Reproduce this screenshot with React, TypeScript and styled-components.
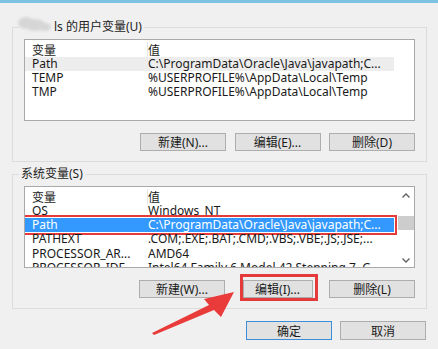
import { createGlobalStyle, styled } from "styled-components";

const Global = createGlobalStyle`
  html, body {
    margin: 0;
    padding: 0;
    background: #f0f0f0;
  }
  body {
    font-family: "Noto Sans", "Noto Sans CJK SC", sans-serif;
    font-size: 12px;
    color: #1a1a1a;
  }
`;

type Row = { name: string; value: string };

const userVars: Row[] = [
  { name: "Path", value: "C:\\ProgramData\\Oracle\\Java\\javapath;C..." },
  { name: "TEMP", value: "%USERPROFILE%\\AppData\\Local\\Temp" },
  { name: "TMP", value: "%USERPROFILE%\\AppData\\Local\\Temp" },
];

const sysVars: Row[] = [
  { name: "OS", value: "Windows_NT" },
  { name: "Path", value: "C:\\ProgramData\\Oracle\\Java\\javapath;C..." },
  { name: "PATHEXT", value: ".COM;.EXE;.BAT;.CMD;.VBS;.VBE;.JS;.JSE;..." },
  { name: "PROCESSOR_AR...", value: "AMD64" },
  { name: "PROCESSOR_IDE...", value: "Intel64 Family 6 Model 42 Stepping 7, G..." },
];

export default function App() {
  return (
    <>
      <Global />
      <Page>
        <Group>
          <Legend>
            <Blur viewBox="0 0 36 20" width="36" height="20">
              <defs>
                <filter id="b">
                  <feGaussianBlur stdDeviation="1.8" />
                </filter>
              </defs>
              <g fill="#d6d6d6" filter="url(#b)">
                <ellipse cx="10" cy="9" rx="8" ry="6" />
                <ellipse cx="19" cy="11" rx="10" ry="6" />
                <ellipse cx="29" cy="13" rx="6" ry="4" />
              </g>
            </Blur>
            ls 的用户变量(U)
          </Legend>
          <List>
            <Rows>
              <Header>
                <NameCell $head>变量</NameCell>
                <ValueCell>值</ValueCell>
              </Header>
              {userVars.map((r, i) => (
                <Line key={r.name} $state={i === 0 ? "soft" : "none"}>
                  <NameCell>{r.name}</NameCell>
                  <ValueCell>{r.value}</ValueCell>
                </Line>
              ))}
            </Rows>
          </List>
          <Buttons>
            <Btn>新建(N)...</Btn>
            <Btn>编辑(E)...</Btn>
            <Btn>删除(D)</Btn>
          </Buttons>
        </Group>

        <Group>
          <Legend>系统变量(S)</Legend>
          <List>
            <Rows>
              <Header>
                <NameCell $head>变量</NameCell>
                <ValueCell>值</ValueCell>
              </Header>
              {sysVars.map((r) => (
                <Line key={r.name} $state={r.name === "Path" ? "blue" : "none"}>
                  <NameCell>{r.name}</NameCell>
                  <ValueCell>{r.value}</ValueCell>
                  {r.name === "Path" && <RowMark />}
                </Line>
              ))}
            </Rows>
            <Scroll>
              <Chevron viewBox="0 0 8 5" width="8" height="5">
                <path d="M0.5 4.5 L4 1 L7.5 4.5" />
              </Chevron>
              <Thumb />
              <Chevron viewBox="0 0 8 5" width="8" height="5">
                <path d="M0.5 0.5 L4 4 L7.5 0.5" />
              </Chevron>
            </Scroll>
          </List>
          <Buttons>
            <Btn>新建(W)...</Btn>
            <Btn $narrow>
              编辑(I)...
              <BtnMark />
            </Btn>
            <Btn>删除(L)</Btn>
          </Buttons>
        </Group>

        <Footer>
          <Btn $primary>确定</Btn>
          <Btn>取消</Btn>
        </Footer>

        <Arrow viewBox="0 0 438 349" width="438" height="349">
          <polygon
            points="152,330 209,302 204,296 234,289 221,314 214,307 154,332"
            fill="#ea3b3b"
          />
        </Arrow>
      </Page>
    </>
  );
}

const Page = styled.div`
  position: relative;
  width: 438px;
  height: 349px;
  box-sizing: border-box;
  border-top: 3px solid #7cc3e3;
  padding: 24px 11px 0 12px;
  display: flex;
  flex-direction: column;
  gap: 12px;
  overflow: hidden;
`;

const Group = styled.div`
  position: relative;
  border: 1px solid #dcdcdc;
  padding: 11px 11px 10px 11px;
  display: flex;
  flex-direction: column;
  gap: 12px;
`;

const Legend = styled.div`
  position: absolute;
  top: -9px;
  left: 6px;
  padding: 0 2px;
  background: #f0f0f0;
  display: flex;
  align-items: center;
  line-height: 16px;
  font-size: 12px;
  color: #222;
`;

const Blur = styled.svg`
  margin: -6px 2px 0 -5px;
`;

const List = styled.div`
  position: relative;
  height: 80px;
  background: #fff;
  border: 1px solid #a9a9a9;
  display: flex;
  overflow: hidden;
`;

const Rows = styled.div`
  flex: 1;
  min-width: 0;
`;

const Header = styled.div`
  display: flex;
  height: 15px;
  margin-top: 1.5px;
  line-height: 15px;
  font-family: "Noto Sans CJK SC", sans-serif;
  font-size: 12px;
`;

const Line = styled.div<{ $state: "none" | "soft" | "blue" }>`
  position: relative;
  display: flex;
  height: 14.4px;
  line-height: 14.4px;
  width: 369px;
  background: ${({ $state }) =>
    $state === "blue" ? "#3399ff" : $state === "soft" ? "#ededed" : "transparent"};
  color: ${({ $state }) => ($state === "blue" ? "#fff" : "#1a1a1a")};
  white-space: nowrap;
`;

const NameCell = styled.div<{ $head?: boolean }>`
  width: 115px;
  flex: none;
  padding-left: 7px;
  border-right: ${({ $head }) => ($head ? "1px solid #e6e6e6" : "1px solid transparent")};
`;

const ValueCell = styled.div`
  white-space: nowrap;
`;

const RowMark = styled.div`
  position: absolute;
  left: -3px;
  right: -3px;
  top: -3px;
  bottom: -3px;
  border: 2.5px solid #e53a3a;
`;

const Scroll = styled.div`
  width: 17px;
  flex: none;
  display: flex;
  flex-direction: column;
  align-items: center;
  padding: 6px 0 4px;
  box-sizing: border-box;
  background: #fff;
`;

const Chevron = styled.svg`
  fill: none;
  stroke: #606060;
  stroke-width: 1.3;
`;

const Thumb = styled.div`
  width: 16px;
  height: 14px;
  margin: 18px 0 auto;
  background: #cdcdcd;
`;

const Buttons = styled.div`
  display: flex;
  justify-content: flex-end;
  gap: 8.5px;
`;

const Btn = styled.div<{ $primary?: boolean; $narrow?: boolean }>`
  position: relative;
  width: ${({ $narrow }) => ($narrow ? "68px" : "84px")};
  margin: ${({ $narrow }) => ($narrow ? "0 8px 0 9px" : "0")};
  height: 16px;
  border: 1px solid ${({ $primary }) => ($primary ? "#3c8ed8" : "#adadad")};
  background: #e1e1e1;
  display: flex;
  align-items: center;
  justify-content: center;
  font-family: "Noto Sans", "Noto Sans CJK SC", sans-serif;
  font-size: 12px;
  color: #1a1a1a;
`;

const BtnMark = styled.div`
  position: absolute;
  left: -4px;
  top: -7px;
  width: 72px;
  height: 21px;
  border: 3px solid #e53a3a;
`;

const Footer = styled.div`
  display: flex;
  justify-content: flex-end;
  gap: 8px;
  padding-right: 1px;

  & > div {
    height: 17px;
  }
`;

const Arrow = styled.svg`
  position: absolute;
  left: 0;
  top: 0;
  pointer-events: none;
`;
